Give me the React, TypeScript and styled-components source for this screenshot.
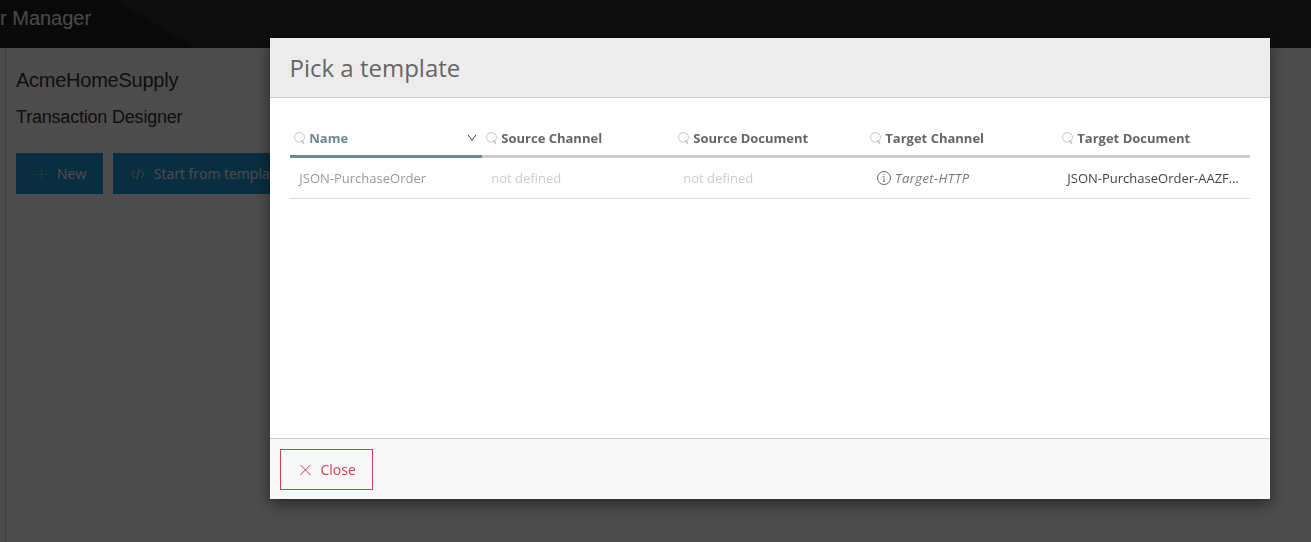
import React from "react";
import styled, { createGlobalStyle, css } from "styled-components";

const GlobalStyle = createGlobalStyle`
  *, *::before, *::after { box-sizing: border-box; }
  html, body, #root { margin: 0; height: 100%; overflow: hidden; }
  body { font-family: "Open Sans", sans-serif; font-size: 13px; background: #fff; }
`;

const Page = styled.div`
  height: 100%;
  display: flex;
  flex-direction: column;
  font-family: "Liberation Sans", Arial, sans-serif;
`;

const TopBar = styled.header`
  height: 48px;
  flex: none;
  padding-top: 6px;
  background: linear-gradient(to top right, #202020 50%, #2c2c2c 50.5%) 115px 0 / 80px 48px no-repeat,
    linear-gradient(#202020, #202020) 0 0 / 115px 48px no-repeat, #2c2c2c;
  color: #f4f4f4;
  font-size: 20px;
  line-height: 24px;
`;

const Content = styled.main`
  flex: 1;
  margin-left: 5px;
  padding: 20px 10px;
  border-left: 1px solid #ccc;
  color: #333;
`;

const PartnerName = styled.h1`
  margin: 0;
  font-size: 20px;
  font-weight: 400;
  line-height: 24px;
  letter-spacing: -0.25px;
`;

const Section = styled.h2`
  margin: 14px 0 25px;
  font-size: 18px;
  font-weight: 400;
  line-height: 22px;
  letter-spacing: -0.2px;
`;

const Toolbar = styled.div`
  display: flex;
  gap: 10px;
`;

const Button = styled.button<{ $variant: "primary" | "danger" }>`
  display: flex;
  align-items: center;
  height: 41px;
  padding: 0 16.5px 0 16.5px;
  border: 1px solid;
  border-radius: 0;
  font: 14px/20px "Open Sans", sans-serif;
  white-space: nowrap;
  svg { flex: none; margin-right: 8px; }
  ${(p) =>
    p.$variant === "primary"
      ? css`background: #2199d8; border-color: #2199d8; color: #fff; padding: 0 15.5px 0 16px;`
      : css`background: transparent; border-color: #d13c53; color: #d13c53;`}
`;

const Backdrop = styled.div`
  position: fixed;
  inset: 0;
  padding-top: 38px;
  background: rgba(0, 0, 0, 0.7);
`;

const Dialog = styled.section`
  width: 1000px;
  height: 461px;
  margin-left: 270px;
  display: flex;
  flex-direction: column;
  background: #fff;
  box-shadow: 0 5px 15px rgba(0, 0, 0, 0.5);
`;

const DialogHeader = styled.header`
  height: 60px;
  padding: 13px 20px 0 19.5px;
  background: #ececec;
  border-bottom: 1px solid #ccc;
  color: #666;
  font-size: 24px;
  line-height: 33px;
`;

const DialogBody = styled.div`
  flex: 1;
  padding: 20px 20px 0;
`;

const DialogFooter = styled.footer`
  height: 61px;
  padding: 10px;
  background: #f8f8f8;
  border-top: 1px solid #ccc;
`;

const Row = styled.div`
  display: grid;
  grid-template-columns: repeat(5, 192px);
`;

const HeadCell = styled.div<{ $active?: boolean }>`
  display: flex;
  align-items: center;
  height: 40px;
  padding: 3px 5px 0 3px;
  border-bottom: 3px solid ${(p) => (p.$active ? "#6b8896" : "#ccc")};
  color: ${(p) => (p.$active ? "#6b8896" : "#666")};
  font-size: 13px;
  font-weight: 700;
`;

const HeadLabel = styled.span`
  flex: 1;
  margin-left: 2.3px;
`;

const Cell = styled.div<{ $color: string; $italic?: boolean }>`
  display: flex;
  align-items: center;
  height: 41px;
  padding: 0 9px 0 9.3px;
  border-bottom: 1px solid #ddd;
  color: ${(p) => p.$color};
  font-style: ${(p) => (p.$italic ? "italic" : "normal")};
  letter-spacing: ${(p) => (p.$italic ? "0.43px" : "normal")};
  font-size: 13px;
  white-space: nowrap;
  svg { flex: none; margin: 0 3px 0 0.7px; }
`;

const SearchIcon = () => (
  <svg width="14" height="14" viewBox="0 0 14 14" fill="none" stroke="#c4c4c4">
    <circle cx="6.5" cy="6.3" r="4.9" />
    <path d="M8.400 9l2.400 3.800" strokeWidth="1.600" />
  </svg>
);

const columns = ["Name", "Source Channel", "Source Document", "Target Channel", "Target Document"];

export default function App() {
  return (
    <>
      <GlobalStyle />
      <Page>
        <TopBar>r Manager</TopBar>
        <Content>
          <PartnerName>AcmeHomeSupply</PartnerName>
          <Section>Transaction Designer</Section>
          <Toolbar>
            <Button $variant="primary">
              <svg width="16" height="16" viewBox="0 0 16 16" fill="none" stroke="#8fccec">
                <path d="M1.500 8.500h13M8.500 2v13" strokeWidth=".6" />
              </svg>
              New
            </Button>
            <Button $variant="primary">
              <svg width="16" height="16" viewBox="0 0 16 16" fill="none" stroke="#e0f0f8">
                <path d="M4.500 4.500L2 8.300l2.500 3.700M11.500 4.500L14 8.300l-2.500 3.700M9.300 3L6.700 13.500" />
              </svg>
              Start from template
            </Button>
          </Toolbar>
        </Content>
      </Page>
      <Backdrop>
        <Dialog role="dialog" aria-label="Pick a template">
          <DialogHeader>Pick a template</DialogHeader>
          <DialogBody>
            <Row>
              {columns.map((name, i) => (
                <HeadCell key={name} $active={i === 0}>
                  <SearchIcon />
                  <HeadLabel>{name}</HeadLabel>
                  {i === 0 && (
                    <svg width="10" height="10" viewBox="0 0 10 10" fill="none" stroke="#444">
                      <path d="M1 1.800l4 5.500L9 1.800" />
                    </svg>
                  )}
                </HeadCell>
              ))}
            </Row>
            <Row>
              <Cell $color="#999">JSON-PurchaseOrder</Cell>
              <Cell $color="#ccc">not defined</Cell>
              <Cell $color="#ccc">not defined</Cell>
              <Cell $color="#777" $italic>
                <svg width="16" height="16" viewBox="0 0 16 16" fill="none" stroke="#666">
                  <circle cx="8" cy="8" r="6.500" />
                  <path d="M6.800 6.500H8v5M7 11.500h2M7.500 4.500h1" strokeWidth=".8" />
                </svg>
                Target-HTTP
              </Cell>
              <Cell $color="#444">JSON-PurchaseOrder-AAZF…</Cell>
            </Row>
          </DialogBody>
          <DialogFooter>
            <Button $variant="danger">
              <svg width="15" height="16" viewBox="0 0 15 16" fill="none" stroke="currentColor">
                <path d="M2.300 2.800l10.200 10.200M12.500 2.800L2.300 13" />
              </svg>
              Close
            </Button>
          </DialogFooter>
        </Dialog>
      </Backdrop>
    </>
  );
}
